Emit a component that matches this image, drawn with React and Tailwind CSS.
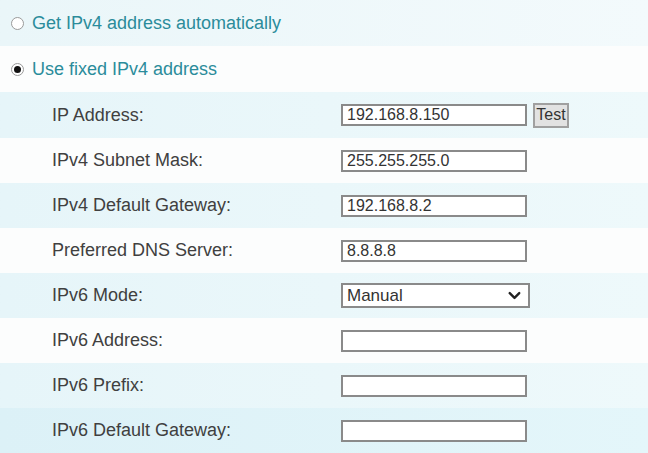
import React, { useState } from "react";
import { ChevronDown } from "lucide-react";

const rows = [
  { label: "IP Address:", value: "192.168.8.150", test: true },
  { label: "IPv4 Subnet Mask:", value: "255.255.255.0" },
  { label: "IPv4 Default Gateway:", value: "192.168.8.2" },
  { label: "Preferred DNS Server:", value: "8.8.8.8" },
  { label: "IPv6 Mode:", select: "Manual" },
  { label: "IPv6 Address:", value: "" },
  { label: "IPv6 Prefix:", value: "" },
  { label: "IPv6 Default Gateway:", value: "" },
];

function Radio({ checked }) {
  return (
    <span className="w-[13px] h-[13px] rounded-full border-[1.5px] border-[#9a9a9a] bg-white flex items-center justify-center shrink-0">
      {checked && <span className="w-[7px] h-[7px] rounded-full bg-[#111]" />}
    </span>
  );
}

export default function App() {
  const [mode, setMode] = useState("fixed");

  return (
    <div className="w-[648px] h-[453px] overflow-hidden flex flex-col text-[18px] font-['Liberation_Sans',Arial,sans-serif] text-[#404040]">
      {/* Mode radios */}
      <div
        className="h-[46px] shrink-0 flex items-center gap-[8px] pl-[11px] bg-gradient-to-r from-[#eaf6f9] to-[#f3fafc] text-[#2b8c9b] cursor-pointer"
        onClick={() => setMode("auto")}
      >
        <Radio checked={mode === "auto"} />
        <span>Get IPv4 address automatically</span>
      </div>
      <div
        className="h-[46px] shrink-0 flex items-center gap-[8px] pl-[11px] bg-[#fcfdfd] text-[#2b8c9b] cursor-pointer"
        onClick={() => setMode("fixed")}
      >
        <Radio checked={mode === "fixed"} />
        <span>Use fixed IPv4 address</span>
      </div>

      {/* Fields */}
      {rows.map((row, i) => (
        <div
          key={row.label}
          className={`shrink-0 flex items-center ${i === 0 ? "h-[46px]" : "h-[45px]"} ${
            i === 7
              ? "bg-gradient-to-r from-[#dcf1f7] to-[#e4f6fa]"
              : i % 2 === 0
              ? "bg-gradient-to-r from-[#e6f5f9] to-[#eef9fb]"
              : "bg-[#fcfdfd]"
          }`}
        >
          <span className="w-[341px] pl-[52px] shrink-0">{row.label}</span>
          {row.select ? (
            <div className="w-[189px] h-[25px] border-2 border-[#8a8a8a] bg-white flex items-center justify-between pl-[4px] pr-[4px] text-[17px] text-[#333]">
              <span>{row.select}</span>
              <ChevronDown className="w-[19px] h-[19px] text-[#222]" strokeWidth={3} />
            </div>
          ) : (
            <input
              type="text"
              defaultValue={row.value}
              className="w-[186px] h-[22px] border-2 border-[#8a8a8a] bg-white pl-[4px] pr-[2px] text-[16px] text-[#333] outline-none"
            />
          )}
          {row.test && (
            <button className="ml-[6px] w-[36px] h-[25px] border-2 border-[#a0a0a0] bg-[#e2e2e2] text-[16px] text-[#333] flex items-center justify-center">
              Test
            </button>
          )}
        </div>
      ))}
    </div>
  );
}
